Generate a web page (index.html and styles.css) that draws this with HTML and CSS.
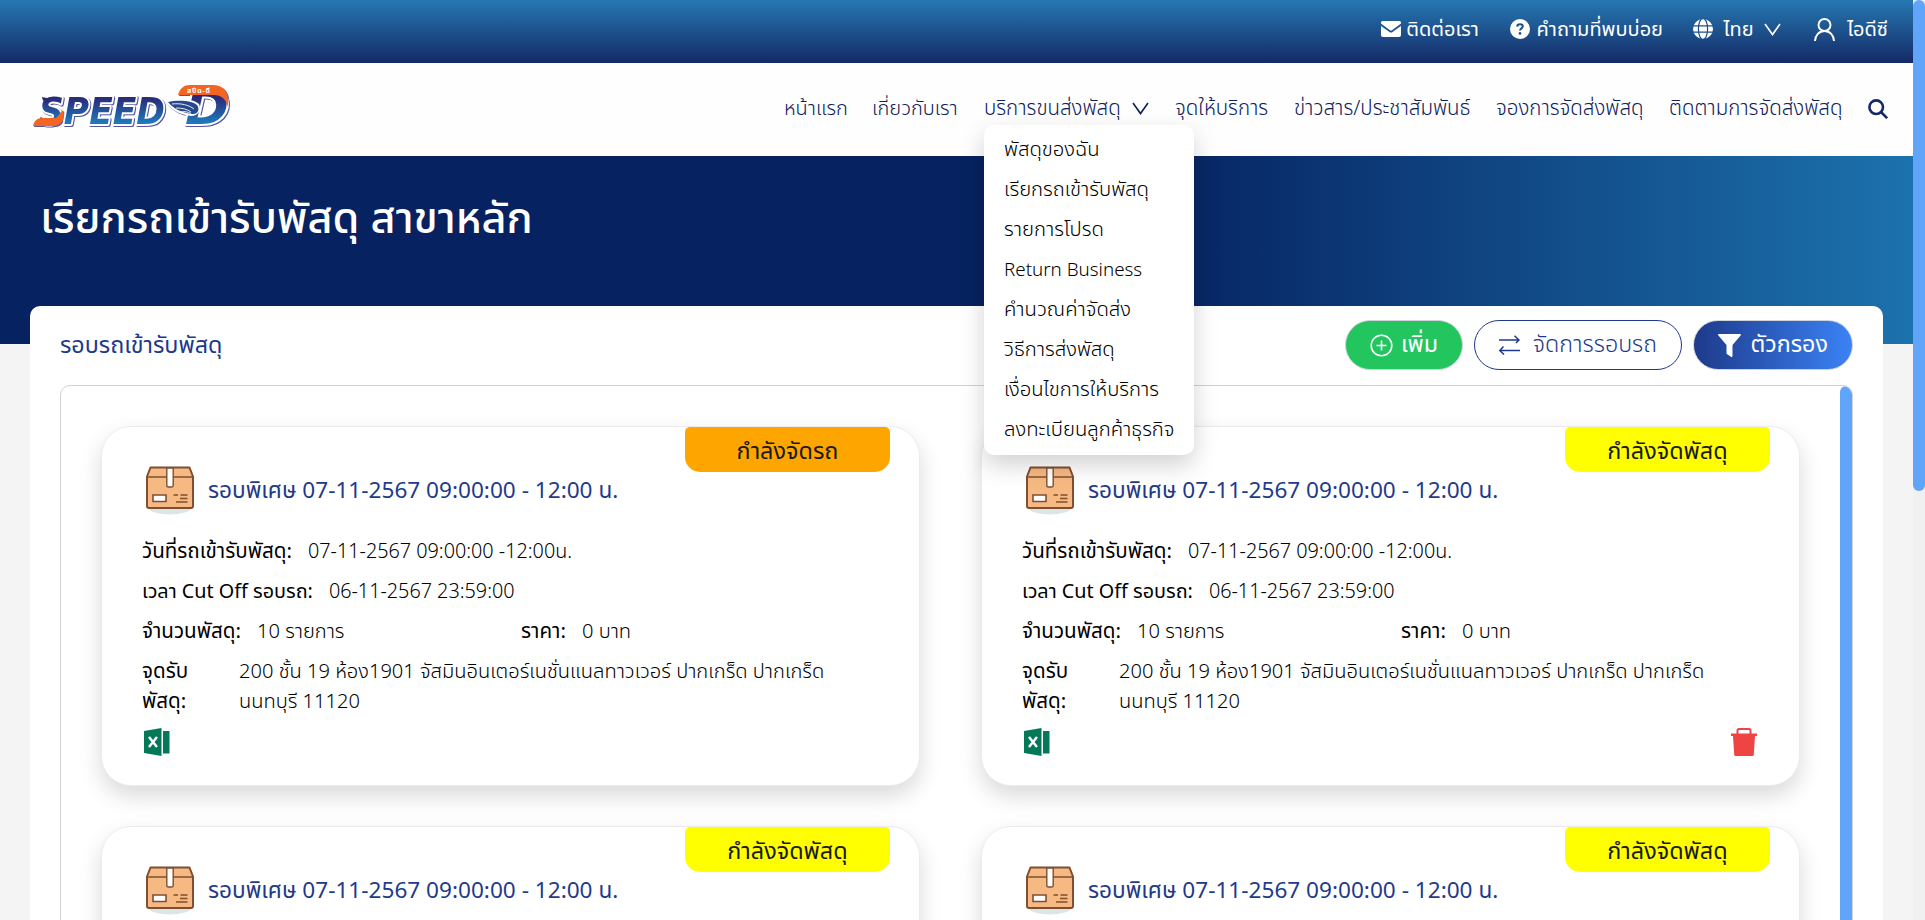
FILE: index.html
```html
<!DOCTYPE html>
<html lang="th">
<head>
<meta charset="utf-8">
<title>SPEED-D</title>
<link rel="stylesheet" href="styles.css">
</head>
<body>
<svg class="defs" width="0" height="0" aria-hidden="true">
  <defs>
    <linearGradient id="logo-blue" gradientUnits="userSpaceOnUse" x1="0" y1="12" x2="0" y2="42">
      <stop offset="0.1" stop-color="#2b2a78"/><stop offset="0.9" stop-color="#1f78b8"/>
    </linearGradient>
    <symbol id="i-box" viewBox="0 0 48 50">
      <ellipse cx="24" cy="42" rx="21" ry="6.5" fill="#dbe6e8"/>
      <path d="M4.500 1.500h39l3.500 9v29.500a2 2 0 0 1-2 2H3a2 2 0 0 1-2-2V10.500z" fill="#f7b983" stroke="#7f4f2f" stroke-width="2" stroke-linejoin="round"/>
      <path d="M1 11h46" stroke="#7f4f2f" stroke-width="1.500"/>
      <path d="M20.800 2v17.500a1.500 1.500 0 0 0 1.500 1.500h3.400a1.500 1.500 0 0 0 1.500-1.500V2z" fill="#fff" stroke="#7f4f2f" stroke-width="1.400"/>
      <path d="M7 29h13v6.500H7z" fill="#fff" stroke="#7f4f2f" stroke-width="1.600"/>
      <path d="M27.500 29h4.500M34.500 29h7M34 32.500h7.500M30 36h11.500" stroke="#7f4f2f" stroke-width="1.500"/>
    </symbol>
    <symbol id="i-excel" viewBox="0 0 26 28">
      <path d="M0 3 17.500 0v28L0 25z" fill="#047857"/>
      <path d="M19 3h6.500v22.500H19z" fill="#047857"/>
      <path d="m5 9 8 10M13 9 5 19" stroke="#fff" stroke-width="2.500"/>
    </symbol>
    <symbol id="i-trash" viewBox="0 0 26 28">
      <path d="M6.500 7V2.500A1.500 1.500 0 0 1 8 1h10a1.500 1.500 0 0 1 1.500 1.500V7" fill="none" stroke="#ef4444" stroke-width="2"/>
      <path d="M0 5.500h26V8h-2l-1.200 18.300A1.500 1.500 0 0 1 21.300 28H4.700a1.500 1.500 0 0 1-1.500-1.700L2 8H0z" fill="#ef4444"/>
    </symbol>
    <symbol id="i-down" viewBox="0 0 17 13"><path d="m1 1 7.500 10.500L16 1" fill="none" stroke="currentColor" stroke-width="1.600"/></symbol>
  </defs>
</svg>

<header class="topbar">
  <a class="tb tb-contact"><svg width="20" height="16" viewBox="0 0 20 16"><path d="M1.500 0h17A1.500 1.500 0 0 1 20 1.500v1L11 9.300a1.700 1.700 0 0 1-2 0L0 2.500v-1A1.500 1.500 0 0 1 1.500 0zM0 5l8.500 6a2.500 2.500 0 0 0 3 0L20 5v9a2 2 0 0 1-2 2H2a2 2 0 0 1-2-2z" fill="#fff"/></svg><span>ติดต่อเรา</span></a>
  <a class="tb tb-faq"><svg width="20" height="20" viewBox="0 0 20 20"><circle cx="10" cy="10" r="10" fill="#fff"/><path d="M7.200 7.600C7.300 6 8.400 5.300 10 5.300s2.800.9 2.800 2.300c0 1.800-2.800 1.900-2.800 3.900" fill="none" stroke="#1b4f8c" stroke-width="2"/><circle cx="10" cy="14.400" r="1.300" fill="#1b4f8c"/></svg><span>คำถามที่พบบ่อย</span></a>
  <a class="tb tb-lang"><svg width="20" height="20" viewBox="0 0 20 20"><circle cx="10" cy="10" r="10" fill="#fff"/><g fill="none" stroke="#1b4f8c" stroke-width="1.200"><ellipse cx="10" cy="10" rx="4.600" ry="10.500"/><path d="M0 6.800h20M0 13.200h20"/></g></svg><span>ไทย</span><svg class="chev" width="17" height="13"><use href="#i-down"/></svg></a>
  <a class="tb tb-user"><svg width="21" height="23" viewBox="0 0 21 23"><g fill="none" stroke="#fff" stroke-width="1.900"><circle cx="10.500" cy="7" r="6"/><path d="M1 23c.3-5.500 4-10 9.500-10s9.200 4.500 9.500 10"/></g></svg><span>ไอดีซี</span></a>
</header>

<nav class="nav">
  <svg class="logo" width="208" height="70" viewBox="0 -10 208 70">
    <g class="logo-art">
      <g class="logo-word" fill="url(#logo-blue)">
        <text x="8" y="41" font-size="38" textLength="126" lengthAdjust="spacingAndGlyphs">SPEED</text>
        <text x="154" y="41" font-size="46" textLength="44" lengthAdjust="spacingAndGlyphs">D</text>
      </g>
      <path d="M2 43c1-5 4-8 9-8h14l7-8c3 9-2 16-9 16z" fill="#f26522"/>
      <path d="M11 14c3 1 7 1 11 1l-6 5c-3-1-5-3-5-6z" fill="#2b2a78"/>
      <path d="M147 12c2-7 6-10 12-10h22c13 0 18 8 16 22-2-8-7-12-14-12z" fill="#f26522"/>
      <path d="M134 18c10-3 27-3 34 3 3 6-1 12-8 12-12-1-22-8-26-15z" fill="#fff"/>
      <path d="M137 19c9-2 23-2 29 3 3 4 1 9-4 9-12-1-20-6-25-12z" fill="#27478f"/>
      <path d="M141 21c9-1 17 1 22 5M145 25c6 0 11 1 15 4M150 29c4-1 7 0 10 1.500" fill="none" stroke="#fff" stroke-width=".9"/>
    </g>
    <text class="logo-tag" x="156" y="10" font-size="7" textLength="23">สปีด-ดี</text>
  </svg>
  <div class="links">
    <a class="n1">หน้าแรก</a>
    <a class="n2">เกี่ยวกับเรา</a>
    <div class="has-menu n3"><span>บริการขนส่งพัสดุ</span><svg width="17" height="13"><use href="#i-down"/></svg>
      <ul class="menu">
        <li>พัสดุของฉัน</li>
        <li>เรียกรถเข้ารับพัสดุ</li>
        <li>รายการโปรด</li>
        <li class="latin">Return Business</li>
        <li>คำนวณค่าจัดส่ง</li>
        <li>วิธีการส่งพัสดุ</li>
        <li>เงื่อนไขการให้บริการ</li>
        <li>ลงทะเบียนลูกค้าธุรกิจ</li>
      </ul>
    </div>
    <a class="n4">จุดให้บริการ</a>
    <a class="n5">ข่าวสาร/ประชาสัมพันธ์</a>
    <a class="n6">จองการจัดส่งพัสดุ</a>
    <a class="n7">ติดตามการจัดส่งพัสดุ</a>
    <svg class="search" width="20" height="20" viewBox="0 0 20 20"><g fill="none" stroke="#142a66" stroke-width="2.600"><circle cx="8.200" cy="8.200" r="6.800"/><path d="m13 13 6.200 6.200"/></g></svg>
  </div>
</nav>

<section class="banner"><h1>เรียกรถเข้ารับพัสดุ สาขาหลัก</h1></section>

<main class="panel">
  <div class="panel-head">
    <h2>รอบรถเข้ารับพัสดุ</h2>
    <div class="actions">
      <button class="btn btn-add"><svg width="23" height="23" viewBox="0 0 23 23"><g fill="none" stroke="#fff" stroke-width="1.600"><circle cx="11.500" cy="11.500" r="10.300"/><path d="M6.500 11.500h10M11.500 6.500v10"/></g></svg><span>เพิ่ม</span></button>
      <button class="btn btn-manage"><svg width="21" height="20" viewBox="0 0 21 20"><path d="M0 5h20M15.500.7 20 5l-3 3M21 15.500H1M4.500 11.500.8 15.500 5 19.500" fill="none" stroke="#1e3a8a" stroke-width="1.500"/></svg><span>จัดการรอบรถ</span></button>
      <button class="btn btn-filter"><svg width="23" height="23" viewBox="0 0 23 23"><path d="M.8 0h21.400a.8.800 0 0 1 .6 1.300L14.500 11v11a1 1 0 0 1-1.600.8L8.900 20a1 1 0 0 1-.4-.8V11L.2 1.300A.8.800 0 0 1 .8 0z" fill="#fff"/></svg><span>ตัวกรอง</span></button>
    </div>
  </div>
  <div class="list">
    <div class="grid">
      <article class="card">
        <div class="badge orange">กำลังจัดรถ</div>
        <div class="title"><svg width="48" height="50"><use href="#i-box"/></svg><h3>รอบพิเศษ 07-11-2567 09:00:00 - 12:00 น.</h3></div>
        <div class="row"><b>วันที่รถเข้ารับพัสดุ:</b><span class="date">07-11-2567 09:00:00 -12:00น.</span></div>
        <div class="row"><b class="cutoff">เวลา Cut Off รอบรถ:</b><span class="date">06-11-2567 23:59:00</span></div>
        <div class="row split"><div><b>จำนวนพัสดุ:</b><span>10 รายการ</span></div><div><b>ราคา:</b><span>0 บาท</span></div></div>
        <div class="row place"><b>จุดรับ<br>พัสดุ:</b><span>200 ชั้น 19 ห้อง1901 จัสมินอินเตอร์เนชั่นแนลทาวเวอร์ ปากเกร็ด ปากเกร็ด<br>นนทบุรี 11120</span></div>
        <div class="tools"><svg width="26" height="28"><use href="#i-excel"/></svg></div>
      </article>
      <article class="card">
        <div class="badge">กำลังจัดพัสดุ</div>
        <div class="title"><svg width="48" height="50"><use href="#i-box"/></svg><h3>รอบพิเศษ 07-11-2567 09:00:00 - 12:00 น.</h3></div>
        <div class="row"><b>วันที่รถเข้ารับพัสดุ:</b><span class="date">07-11-2567 09:00:00 -12:00น.</span></div>
        <div class="row"><b class="cutoff">เวลา Cut Off รอบรถ:</b><span class="date">06-11-2567 23:59:00</span></div>
        <div class="row split"><div><b>จำนวนพัสดุ:</b><span>10 รายการ</span></div><div><b>ราคา:</b><span>0 บาท</span></div></div>
        <div class="row place"><b>จุดรับ<br>พัสดุ:</b><span>200 ชั้น 19 ห้อง1901 จัสมินอินเตอร์เนชั่นแนลทาวเวอร์ ปากเกร็ด ปากเกร็ด<br>นนทบุรี 11120</span></div>
        <div class="tools"><svg width="26" height="28"><use href="#i-excel"/></svg><svg width="26" height="28"><use href="#i-trash"/></svg></div>
      </article>
      <article class="card">
        <div class="badge">กำลังจัดพัสดุ</div>
        <div class="title"><svg width="48" height="50"><use href="#i-box"/></svg><h3>รอบพิเศษ 07-11-2567 09:00:00 - 12:00 น.</h3></div>
      </article>
      <article class="card">
        <div class="badge">กำลังจัดพัสดุ</div>
        <div class="title"><svg width="48" height="50"><use href="#i-box"/></svg><h3>รอบพิเศษ 07-11-2567 09:00:00 - 12:00 น.</h3></div>
      </article>
    </div>
    <div class="inner-bar"></div>
  </div>
</main>
<div class="page-bar"><div class="page-thumb"></div></div>
</body>
</html>
```
FILE: styles.css
```css
* { box-sizing: border-box; }
body {
  margin: 0;
  width: 1925px;
  height: 920px;
  overflow: hidden;
  position: relative;
  background: #f4f4f4;
  color: #000;
  font: 300 20.1px/30px "Noto Sans Thai", "Noto Sans", sans-serif;
  padding-right: 12px;
}
.defs { position: absolute; }
h1, h2, h3, ul { margin: 0; padding: 0; }
h1, h2, h3 { font-weight: 400; }
a, span, b, h1, h2, h3, li, .badge { white-space: nowrap; }
svg { flex: none; display: block; }

.topbar {
  height: 63px;
  padding: 0 25px 5px 0;
  display: flex;
  justify-content: flex-end;
  align-items: center;
  background: linear-gradient(#2678b2, #142a66);
  color: #fff;
  font-size: 20px;
  font-weight: 400;
}
.tb { display: flex; align-items: center; justify-content: space-between; }
.tb span { padding-top: 2px; }
.tb-contact { width: 98px; }
.tb-faq { width: 153px; margin-left: 31px; }
.tb-lang { width: 88px; margin-left: 30px; }
.tb-user { width: 74px; margin-left: 33px; }

.nav {
  height: 93px;
  padding: 0 25px 0 31px;
  display: flex;
  justify-content: space-between;
  background: #fefefe;
  color: #0c205c;
}
.logo { margin-top: 10px; }
.logo-art { filter: drop-shadow(1px 1.5px 0 #55559f); }
.logo-word {
  font-family: "DejaVu Sans", sans-serif;
  font-weight: 700;
  font-style: italic;
  stroke: #fff;
  stroke-width: 4px;
  stroke-linejoin: round;
  paint-order: stroke;
}
.logo-tag { font-weight: 700; fill: #fff; }
.links { display: flex; align-items: center; gap: 26px; padding-bottom: 2px; font-size: 20.5px; }
.n1 { width: 62px; } .n2 { width: 86px; } .n3 { width: 165px; } .n4 { width: 93px; }
.n5 { width: 176px; } .n6 { width: 147px; } .n7 { width: 173px; }
.n1, .n2 { font-size: 20px; }
.has-menu { position: relative; display: flex; align-items: center; justify-content: space-between; }
.menu {
  position: absolute;
  top: 31px;
  left: 0;
  z-index: 5;
  width: 210px;
  height: 330px;
  padding: 5px 20px;
  list-style: none;
  font-size: 20.3px;
  line-height: 40px;
  background: #fff;
  color: #000;
  border-radius: 10px;
  box-shadow: 0 10px 24px rgba(0, 0, 0, .18);
}
.menu .latin { font-size: 18.8px; }

.banner {
  height: 188px;
  padding: 33px 40px;
  background: linear-gradient(90deg, #062260 60%, #1c72ad);
  color: #fff;
}
.banner h1 { font-size: 43.2px; line-height: 62px; font-weight: 500; }

.panel {
  position: relative;
  height: 640px;
  margin: -38px 30px 0;
  padding: 0 30px;
  border-radius: 10px;
  background: #fff;
}
.panel-head { height: 79px; display: flex; justify-content: space-between; align-items: center; color: #1e3a8a; }
.panel-head h2 { font-size: 23.3px; padding-top: 1px; }
.actions { display: flex; gap: 11px; padding-bottom: 1px; }
.btn {
  height: 50px;
  padding: 0 24px;
  display: flex;
  align-items: center;
  justify-content: space-between;
  border: 1px solid #d0d4da;
  border-radius: 25px;
  background: #fff;
  color: #fff;
  font: 300 23.3px/30px "Noto Sans Thai", "Noto Sans", sans-serif;
}
.btn-add { width: 118px; background: #22c55e; font-weight: 400; }
.btn-manage { width: 208px; border-color: #1e3a8a; color: #1e3a8a; }
.btn-filter { width: 160px; background: linear-gradient(90deg, #1e3a8a, #3b82f6); font-weight: 400; }

.list {
  height: 560px;
  display: flex;
  border: 1px solid #d1d1d1;
  border-radius: 10px;
  overflow: hidden;
}
.grid {
  flex: 1;
  padding: 40px 40px 0;
  display: grid;
  grid-template-columns: repeat(2, minmax(0, 1fr));
  grid-auto-rows: 360px;
  gap: 40px 61px;
}
.inner-bar { width: 12px; background: #60a5fa; border-radius: 6px; }
.card {
  position: relative;
  padding: 37px 40px 0;
  border: 1px solid #ececec;
  border-radius: 30px;
  background: #fff;
  box-shadow: 0 10px 22px rgba(0, 0, 0, .15);
}
.badge {
  position: absolute;
  top: 0;
  right: 29px;
  width: 205px;
  height: 45px;
  padding-top: 10px;
  border-radius: 5px 5px 15px 15px;
  background: #ff0;
  color: #1a1a1a;
  font-size: 23.4px;
  font-weight: 400;
  text-align: center;
}
.badge.orange { background: #ffa500; }
.title { height: 53px; padding-left: 4px; display: flex; align-items: center; gap: 14px; }
.title h3 { font-size: 22.6px; color: #1e3a8a; }
.row { height: 40px; display: flex; align-items: center; gap: 16px; }
.title + .row { margin-top: 15px; }
.row b { font-size: 20.6px; font-weight: 400; }
.row .cutoff { font-size: 19.8px; }
.row .date { font-size: 19.8px; }
.split > div { display: flex; gap: 16px; width: 379px; flex: none; }
.split { gap: 0; }
.split > div + div { margin-left: 0; }
.place { height: 70px; gap: 0; }
.place b { width: 97px; }
.tools { margin-top: 6px; padding: 0 2px; display: flex; justify-content: space-between; }

.page-bar { position: absolute; top: 0; right: 0; width: 12px; height: 920px; background: #f0f0f0; }
.page-thumb { height: 491px; border-radius: 6px; background: #60a5fa; }
```
